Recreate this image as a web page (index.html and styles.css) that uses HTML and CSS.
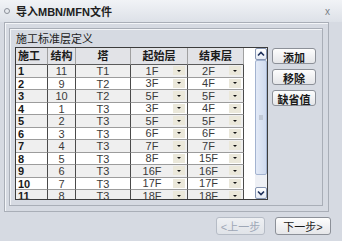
FILE: index.html
```html
<!DOCTYPE html>
<html lang="zh-CN">
<head>
  <meta charset="UTF-8">
  <title>导入MBN/MFN文件</title>
  <link rel="stylesheet" href="styles.css">
</head>
<body>
  <div class="dialog">
    <!-- Barra de título -->
    <div class="titlebar">
      <span class="app-icon"></span>
      <span class="title">导入MBN/MFN文件</span>
      <span class="close">x</span>
    </div>

    <div class="frame">
      <div class="group">
        <div class="group-title">施工标准层定义</div>
        <div class="group-body">
          <div class="grid">
            <div class="grid-view">
              <div class="row head">
                <div class="cell first">施工</div>
                <div class="cell">结构</div>
                <div class="cell">塔</div>
                <div class="cell">起始层</div>
                <div class="cell">结束层</div>
              </div>
              <div class="row odd"><div class="cell first">1</div><div class="cell">11</div><div class="cell">T1</div><div class="cell combo"><span>1F</span><i class="dd"></i></div><div class="cell combo"><span>2F</span><i class="dd"></i></div></div>
              <div class="row"><div class="cell first">2</div><div class="cell">9</div><div class="cell">T2</div><div class="cell combo"><span>3F</span><i class="dd"></i></div><div class="cell combo"><span>4F</span><i class="dd"></i></div></div>
              <div class="row odd"><div class="cell first">3</div><div class="cell">10</div><div class="cell">T2</div><div class="cell combo"><span>5F</span><i class="dd"></i></div><div class="cell combo"><span>5F</span><i class="dd"></i></div></div>
              <div class="row"><div class="cell first">4</div><div class="cell">1</div><div class="cell">T3</div><div class="cell combo"><span>3F</span><i class="dd"></i></div><div class="cell combo"><span>4F</span><i class="dd"></i></div></div>
              <div class="row odd"><div class="cell first">5</div><div class="cell">2</div><div class="cell">T3</div><div class="cell combo"><span>5F</span><i class="dd"></i></div><div class="cell combo"><span>5F</span><i class="dd"></i></div></div>
              <div class="row"><div class="cell first">6</div><div class="cell">3</div><div class="cell">T3</div><div class="cell combo"><span>6F</span><i class="dd"></i></div><div class="cell combo"><span>6F</span><i class="dd"></i></div></div>
              <div class="row odd"><div class="cell first">7</div><div class="cell">4</div><div class="cell">T3</div><div class="cell combo"><span>7F</span><i class="dd"></i></div><div class="cell combo"><span>7F</span><i class="dd"></i></div></div>
              <div class="row"><div class="cell first">8</div><div class="cell">5</div><div class="cell">T3</div><div class="cell combo"><span>8F</span><i class="dd"></i></div><div class="cell combo"><span>15F</span><i class="dd"></i></div></div>
              <div class="row odd"><div class="cell first">9</div><div class="cell">6</div><div class="cell">T3</div><div class="cell combo"><span>16F</span><i class="dd"></i></div><div class="cell combo"><span>16F</span><i class="dd"></i></div></div>
              <div class="row"><div class="cell first">10</div><div class="cell">7</div><div class="cell">T3</div><div class="cell combo"><span>17F</span><i class="dd"></i></div><div class="cell combo"><span>17F</span><i class="dd"></i></div></div>
              <div class="row odd"><div class="cell first">11</div><div class="cell">8</div><div class="cell">T3</div><div class="cell combo"><span>18F</span><i class="dd"></i></div><div class="cell combo"><span>18F</span><i class="dd"></i></div></div>
            </div>

            <!-- Barra de desplazamiento -->
            <div class="scrollbar">
              <div class="sb-btn">
                <svg width="10" height="10" viewBox="0 0 10 10"><polyline points="2,6.5 5,3.5 8,6.5" fill="none" stroke="#1d2f5a" stroke-width="1.6"/></svg>
              </div>
              <div class="sb-thumb"><span class="grip"></span></div>
              <div class="sb-track"></div>
              <div class="sb-btn">
                <svg width="10" height="10" viewBox="0 0 10 10"><polyline points="2,3.5 5,6.5 8,3.5" fill="none" stroke="#1d2f5a" stroke-width="1.6"/></svg>
              </div>
            </div>
          </div>

          <div class="side-buttons">
            <button class="btn strong">添加</button>
            <button class="btn strong">移除</button>
            <button class="btn strong">缺省值</button>
          </div>
        </div>
      </div>
    </div>

    <div class="footer">
      <button class="btn prev" disabled>&lt;上一步</button>
      <button class="btn next">下一步&gt;</button>
    </div>
  </div>
</body>
</html>
```

FILE: styles.css
```css
body {
  margin: 0;
  background-color: #d6dae2;
  font-family: "Liberation Sans", "Noto Sans CJK SC", sans-serif;
  font-size: 11px;
  color: #1a1a1a;
}

.dialog {
  width: 342px;
  height: 241px;
  overflow: hidden;
}

/* Barra de título */
.titlebar {
  height: 22px;
  display: flex;
  align-items: center;
  background: linear-gradient(#f1f3f6, #dde1e8);
}

.app-icon {
  width: 4px;
  height: 4px;
  border: 1px solid #8a8f98;
  border-radius: 50%;
  margin: 0 6px 0 4px;
}

.title {
  font-weight: bold;
  font-size: 11px;
  color: #202020;
  flex: 1;
}

.close {
  color: #7a7e86;
  font-size: 10px;
  margin-right: 12px;
}

/* Marco y grupo */
.frame {
  margin-left: 4px;
  width: 325px;
  height: 190px;
  box-sizing: border-box;
  border: 1px solid #a9aeb7;
  box-shadow: inset 1px 1px 0 #f3f5f8;
  padding: 5px 0 0 4px;
}

.group {
  width: 314px;
  height: 178px;
  box-sizing: border-box;
  border: 1px solid #a9aeb7;
  box-shadow: inset 1px 1px 0 #f3f5f8;
}

.group-title {
  padding: 4px 0 0 6px;
  line-height: 13px;
  height: 13px;
  color: #222;
}

.group-body {
  display: flex;
  margin-top: 1px;
  padding-left: 5px;
}

/* Rejilla */
.grid {
  width: 253px;
  height: 153px;
  box-sizing: border-box;
  border: 1px solid #3c3c3c;
  background: #fff;
  display: flex;
}

.grid-view {
  width: 239px;
  overflow: hidden;
}

.row {
  display: grid;
  grid-template-columns: 32px 28px 55px 57px 56px;
  width: 228px;
  height: 12.5px;
  line-height: 12px;
}

.row.odd {
  background-color: #efefef;
}

.row.head {
  height: 17px;
  line-height: 16px;
  background-color: #e2e3e7;
  font-weight: bold;
}

.cell {
  box-sizing: border-box;
  border-right: 1px solid #4a4a4a;
  border-bottom: 1px solid #9c9c9c;
  text-align: center;
  color: #3a3a3a;
  overflow: hidden;
  white-space: nowrap;
}

.head .cell {
  border-right-color: #a0a0a0;
  border-bottom-color: #5a5a5a;
  color: #1a1a1a;
}

.cell.first {
  text-align: left;
  padding-left: 2px;
  font-weight: bold;
  color: #1a1a1a;
}

.combo {
  display: flex;
  align-items: center;
}

.combo span {
  flex: 1;
  text-align: center;
}

.dd {
  width: 12px;
  height: 9px;
  margin-right: 2px;
  background-color: #ebe8da;
  display: flex;
  align-items: center;
  justify-content: center;
}

.dd::after {
  content: "";
  border-top: 2px solid #111;
  border-left: 2px solid transparent;
  border-right: 2px solid transparent;
}

/* Barra de desplazamiento */
.scrollbar {
  width: 12px;
  display: flex;
  flex-direction: column;
  background-color: #eef0f5;
}

.sb-btn {
  height: 12px;
  box-sizing: border-box;
  border: 1px solid #8796b3;
  border-radius: 2px;
  background: linear-gradient(#ffffff, #e4e9f3);
  display: flex;
  align-items: center;
  justify-content: center;
}

.sb-btn svg {
  display: block;
}

.sb-thumb {
  height: 115px;
  box-sizing: border-box;
  border: 1px solid #a3b3d0;
  border-radius: 2px;
  background: linear-gradient(90deg, #e3eaf7, #cfdaee);
  display: flex;
  align-items: center;
  justify-content: center;
}

.grip {
  width: 4px;
  height: 5px;
  background-color: #c0c8d6;
}

.sb-track {
  flex: 1;
}

/* Botones */
.side-buttons {
  display: flex;
  flex-direction: column;
  gap: 5px;
  margin: 1px 0 0 4px;
}

.btn {
  font-family: "Liberation Sans", "Noto Sans CJK SC", sans-serif;
  font-size: 11px;
  color: #1a1a1a;
  padding: 0;
  border: 1px solid #8c9098;
  border-radius: 3px;
  background: linear-gradient(#fdfdfd, #e5e6e9);
  box-sizing: border-box;
}

.side-buttons .btn {
  width: 44px;
  height: 16px;
}

.btn.strong {
  font-weight: bold;
}

.footer {
  display: flex;
  justify-content: flex-end;
  gap: 10px;
  padding: 5px 11px 0 0;
}

.footer .btn {
  height: 18px;
}

.btn.prev {
  width: 49px;
  color: #9ea7b6;
  border-color: #b6bcc6;
  background: linear-gradient(#eef0f3, #e0e3e8);
}

.btn.next {
  width: 56px;
}
```
